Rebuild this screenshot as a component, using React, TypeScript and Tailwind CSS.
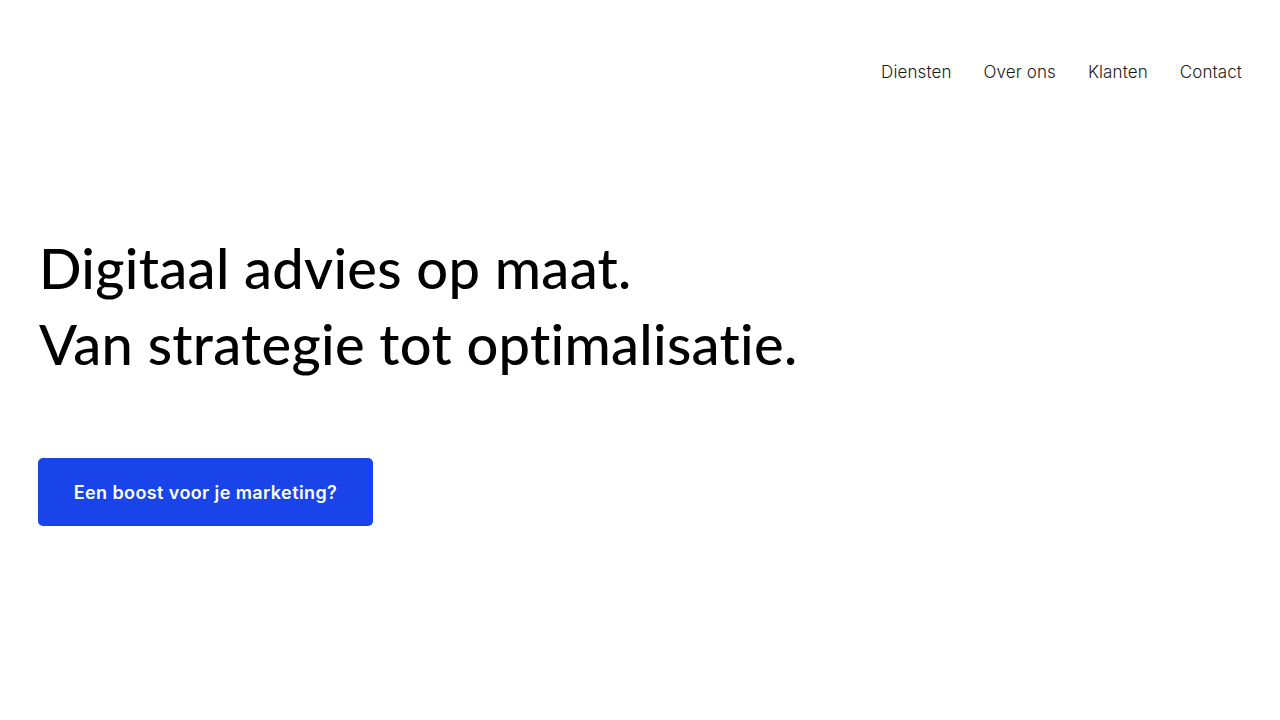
export default function App() {
  const nav = ['Diensten', 'Over ons', 'Klanten', 'Contact']
  return (
    <div className="min-h-screen bg-white font-['Inter',sans-serif]">
      <header className="flex justify-end pt-[59px] pr-[38px]">
        <nav className="flex gap-[32px]">
          {nav.map((n) => (
            <a key={n} href="#" className="text-[17px] font-light leading-[26px] tracking-[0.1px] text-[#1a1a1a]">
              {n}
            </a>
          ))}
        </nav>
      </header>

      <main className="pl-[39px] pt-[145px]">
        <h1 className="font-['Lato',sans-serif] text-[56px] font-medium leading-[76px] tracking-[0.3px] text-black [font-variant-ligatures:none]">
          Digitaal advies op maat.
          <br />
          Van strategie tot optimalisatie.
        </h1>
        <button className="mt-[76px] -ml-px flex h-[68px] w-[335px] items-center justify-center rounded-[5px] bg-[#1944ea] text-[18px] font-semibold tracking-[0.4px] text-white">
          Een boost voor je marketing?
        </button>
      </main>
    </div>
  )
}
